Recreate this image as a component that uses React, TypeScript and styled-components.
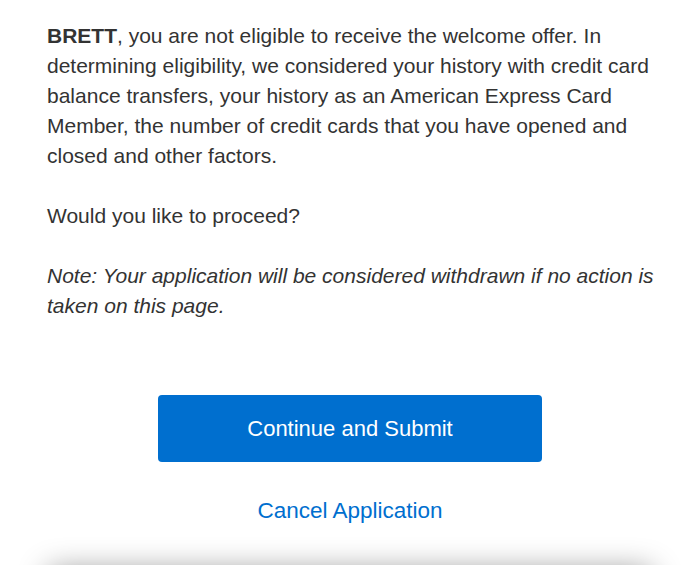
import React from "react";
import styled, { createGlobalStyle } from "styled-components";

const GlobalStyle = createGlobalStyle`
  html, body {
    margin: 0;
    padding: 0;
    background: #ffffff;
    overflow: hidden;
  }
  body {
    font-family: "Liberation Sans", Arial, Helvetica, sans-serif;
    color: #333333;
  }
`;

const Page = styled.div({
  display: "flex",
  flexDirection: "column",
  width: 700,
  height: 565,
  overflow: "hidden",
});

const Content = styled.div({
  padding: "21px 40px 0 47px",
});

const Paragraph = styled.p<{ $italic?: boolean }>`
  margin: 0 0 30px 0;
  font-size: 21px;
  line-height: 30px;
  font-style: ${(p) => (p.$italic ? "italic" : "normal")};
`;

const Actions = styled.div({
  display: "flex",
  flexDirection: "column",
  alignItems: "center",
  marginTop: 44,
  flexShrink: 0,
});

const PrimaryButton = styled.button({
  width: 384,
  height: 67,
  border: "none",
  borderRadius: 4,
  backgroundColor: "#006fcf",
  color: "#ffffff",
  fontFamily: "inherit",
  fontSize: 22,
  cursor: "pointer",
});

const LinkButton = styled.button({
  marginTop: 34,
  border: "none",
  background: "none",
  color: "#006fcf",
  fontFamily: "inherit",
  fontSize: 22.5,
  lineHeight: "30px",
  padding: 0,
  cursor: "pointer",
});

const NextCard = styled.div({
  margin: "44px 48px 0 48px",
  height: 200,
  flexShrink: 0,
  backgroundColor: "#ffffff",
  borderRadius: 6,
  boxShadow: "0 0 30px rgba(0, 0, 0, 0.42)",
});

function App() {
  return (
    <Page>
      <GlobalStyle />
      <Content>
        <Paragraph>
          <b>BRETT</b>, you are not eligible to receive the welcome offer. In
          determining eligibility, we considered your history with credit card
          balance transfers, your history as an American Express Card Member,
          the number of credit cards that you have opened and closed and other
          factors.
        </Paragraph>
        <Paragraph>Would you like to proceed?</Paragraph>
        <Paragraph $italic>
          Note: Your application will be considered withdrawn if no action is
          taken on this page.
        </Paragraph>
      </Content>
      <Actions>
        <PrimaryButton>Continue and Submit</PrimaryButton>
        <LinkButton>Cancel Application</LinkButton>
      </Actions>
      <NextCard />
    </Page>
  );
}

export default App;
